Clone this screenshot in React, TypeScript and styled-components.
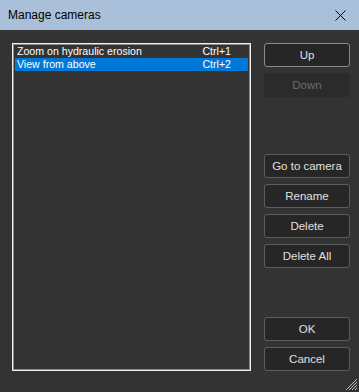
import React, { useState } from 'react';
import styled, { createGlobalStyle } from 'styled-components';

const GlobalStyle = createGlobalStyle`
  html, body {
    margin: 0;
    padding: 0;
    background: #333333;
  }
  body {
    font-family: "Liberation Sans", Arial, sans-serif;
  }
`;

const Window = styled.div`
  width: 359px;
  height: 392px;
  display: flex;
  flex-direction: column;
  background: #333333;
  position: relative;
  overflow: hidden;
`;

const TitleBar = styled.div`
  height: 30px;
  flex: 0 0 30px;
  display: flex;
  align-items: center;
  justify-content: space-between;
  background: #aabfd9;
  padding: 0 13px 0 8px;
  box-sizing: border-box;
`;

const Title = styled.span`
  font-size: 12px;
  color: #000;
`;

const CloseIcon = styled.svg`
  width: 11px;
  height: 11px;
  display: block;
`;

const Body = styled.div`
  flex: 1;
  display: flex;
  gap: 13px;
  padding: 13px 9px 0 12px;
`;

const ListBox = styled.div`
  width: 239px;
  height: 328px;
  box-sizing: border-box;
  border: 1px solid #f0f0f0;
  box-shadow: inset 0 0 0 1px #8c8c8c;
  padding: 1px 2px;
  background: #333333;
`;

const Row = styled.div<{ $selected?: boolean }>`
  display: flex;
  justify-content: space-between;
  height: 13px;
  line-height: 13px;
  padding: 0 17px 0 2px;
  font-size: 10.6px;
  color: #ffffff;
  background: ${p => (p.$selected ? '#0078d7' : 'transparent')};
  cursor: default;
`;

const Buttons = styled.div`
  width: 86px;
  display: flex;
  flex-direction: column;
`;

const Group = styled.div<{ $top: number }>`
  display: flex;
  flex-direction: column;
  gap: 6px;
  margin-top: ${p => p.$top}px;
`;

const Button = styled.button<{ $focus?: boolean }>`
  height: 24px;
  box-sizing: border-box;
  border-radius: 3px;
  border: 1px solid ${p => (p.$focus ? '#8a8a8a' : '#5e5e5e')};
  background: #262626;
  color: #e0e0e0;
  font-family: "Liberation Sans", Arial, sans-serif;
  font-size: 11.5px;
  padding: 0;
  cursor: pointer;

  &:disabled {
    border-color: #2b2b2b;
    background: #2b2b2b;
    color: #6b6b6b;
    cursor: default;
  }
`;

const Grip = styled.svg`
  position: absolute;
  right: 1px;
  bottom: 1px;
  width: 13px;
  height: 13px;
`;

const cameras = [
  { name: 'Zoom on hydraulic erosion', key: 'Ctrl+1' },
  { name: 'View from above', key: 'Ctrl+2' },
];

export default function App() {
  const [selected, setSelected] = useState(1);

  return (
    <>
      <GlobalStyle />
      <Window>
        <TitleBar>
          <Title>Manage cameras</Title>
          <CloseIcon viewBox="0 0 11 11">
            <path d="M0.5 0.5 L10.5 10.5 M10.5 0.5 L0.5 10.5" stroke="#000" strokeWidth="1" />
          </CloseIcon>
        </TitleBar>
        <Body>
          <ListBox>
            {cameras.map((c, i) => (
              <Row key={c.key} $selected={i === selected} onClick={() => setSelected(i)}>
                <span>{c.name}</span>
                <span>{c.key}</span>
              </Row>
            ))}
          </ListBox>
          <Buttons>
            <Group $top={0}>
              <Button $focus>Up</Button>
              <Button disabled>Down</Button>
            </Group>
            <Group $top={57}>
              <Button>Go to camera</Button>
              <Button>Rename</Button>
              <Button>Delete</Button>
              <Button>Delete All</Button>
            </Group>
            <Group $top={49}>
              <Button>OK</Button>
              <Button>Cancel</Button>
            </Group>
          </Buttons>
        </Body>
        <Grip viewBox="0 0 13 13">
          <path d="M12 1 L1 12 M12 4 L4 12 M12 7 L7 12 M12 10 L10 12" stroke="#bdbdbd" strokeWidth="1" />
        </Grip>
      </Window>
    </>
  );
}
